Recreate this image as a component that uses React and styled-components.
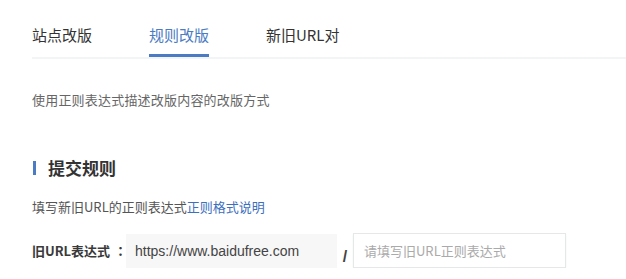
import React from "react";
import styled, { createGlobalStyle } from "styled-components";

// < STYLE >
const GlobalStyle = createGlobalStyle`
    body {
        margin: 0;
        background: #fff;
        font-family: "Noto Sans CJK SC", "Noto Sans", sans-serif;
        color: #333;
    }
`;

const Page = styled.div`
    width: 100%;
    overflow: hidden;
`;

const TabBar = styled.div`
    display: flex;
    gap: 57px;
    margin-left: 32px;
    border-bottom: 2px solid #f3f4f5;
`;

const Tab = styled.div`
    position: relative;
    padding: 25px 0 12px;
    font-size: 15px;
    line-height: 20px;
    color: ${(p) => (p.$active ? "#4a7bc3" : "#333")};
    white-space: nowrap;

    &::after {
        content: "";
        display: ${(p) => (p.$active ? "block" : "none")};
        position: absolute;
        left: 0;
        right: 0;
        bottom: 0;
        height: 3px;
        background: #4a7bc3;
    }
`;

const Body = styled.div`
    padding-left: 32px;
`;

const Description = styled.p`
    margin: 31px 0 0;
    font-size: 13px;
    line-height: 20px;
    letter-spacing: 0.2px;
    color: #666;
`;

const SectionTitle = styled.h2`
    display: flex;
    align-items: center;
    gap: 12px;
    margin: 46px 0 0;
    font-size: 17px;
    line-height: 24px;
    font-weight: bold;
    color: #333;

    &::before {
        content: "";
        width: 3px;
        height: 14px;
        margin-left: 1px;
        background: #4a7bc3;
    }
`;

const Hint = styled.p`
    margin: 17px 0 0;
    font-size: 13px;
    line-height: 20px;
    color: #555;

    a {
        color: #3d6fc0;
        text-decoration: none;
    }
`;

const FieldRow = styled.div`
    display: flex;
    align-items: center;
    margin-top: 16px;
    height: 35px;
`;

const Label = styled.label`
    width: 94px;
    font-size: 13px;
    font-weight: bold;
    color: #3a3a3a;
    white-space: nowrap;

    span {
        margin-left: 4px;
        font-family: "Noto Sans CJK TC", sans-serif;
    }
`;

const Input = styled.input`
    box-sizing: border-box;
    width: ${(p) => p.$width}px;
    height: ${(p) => (p.$filled ? 34 : 35)}px;
    padding: 0 0 0 ${(p) => (p.$filled ? 9 : 10)}px;
    border: ${(p) => (p.$filled ? "none" : "1px solid #e6e7e9")};
    background: ${(p) => (p.$filled ? "#f7f7f7" : "#fff")};
    box-shadow: ${(p) => (p.$filled ? "none" : "0 1px 2px rgba(0, 0, 0, 0.05)")};
    font-family: ${(p) =>
        p.$filled
            ? `"Liberation Sans", Arial, sans-serif`
            : `"Noto Sans CJK SC", sans-serif`};
    font-size: ${(p) => (p.$filled ? 14 : 13)}px;
    color: #444;
    outline: none;

    &::placeholder {
        color: #aaa;
    }
`;

const Slash = styled.span`
    width: 16px;
    margin-top: 12px;
    text-align: center;
    font-family: "Liberation Sans", Arial, sans-serif;
    font-size: 16px;
    line-height: 16px;
    font-weight: bold;
    color: #444;
`;
// </ STYLE >

const tabs = ["站点改版", "规则改版", "新旧URL对"];

export default function App() {
    return (
        <Page>
            <GlobalStyle />

            <TabBar>
                {tabs.map((t) => (
                    <Tab key={t} $active={t === "规则改版"}>
                        {t}
                    </Tab>
                ))}
            </TabBar>

            <Body>
                <Description>使用正则表达式描述改版内容的改版方式</Description>

                <SectionTitle>提交规则</SectionTitle>

                <Hint>
                    填写新旧URL的正则表达式<a href="#">正则格式说明</a>
                </Hint>

                <FieldRow>
                    <Label>
                        旧URL表达式<span>：</span>
                    </Label>
                    <Input
                        $filled
                        $width={211}
                        readOnly
                        defaultValue="https://www.baidufree.com"
                    />
                    <Slash>/</Slash>
                    <Input $width={213} placeholder="请填写旧URL正则表达式" />
                </FieldRow>
            </Body>
        </Page>
    );
}
